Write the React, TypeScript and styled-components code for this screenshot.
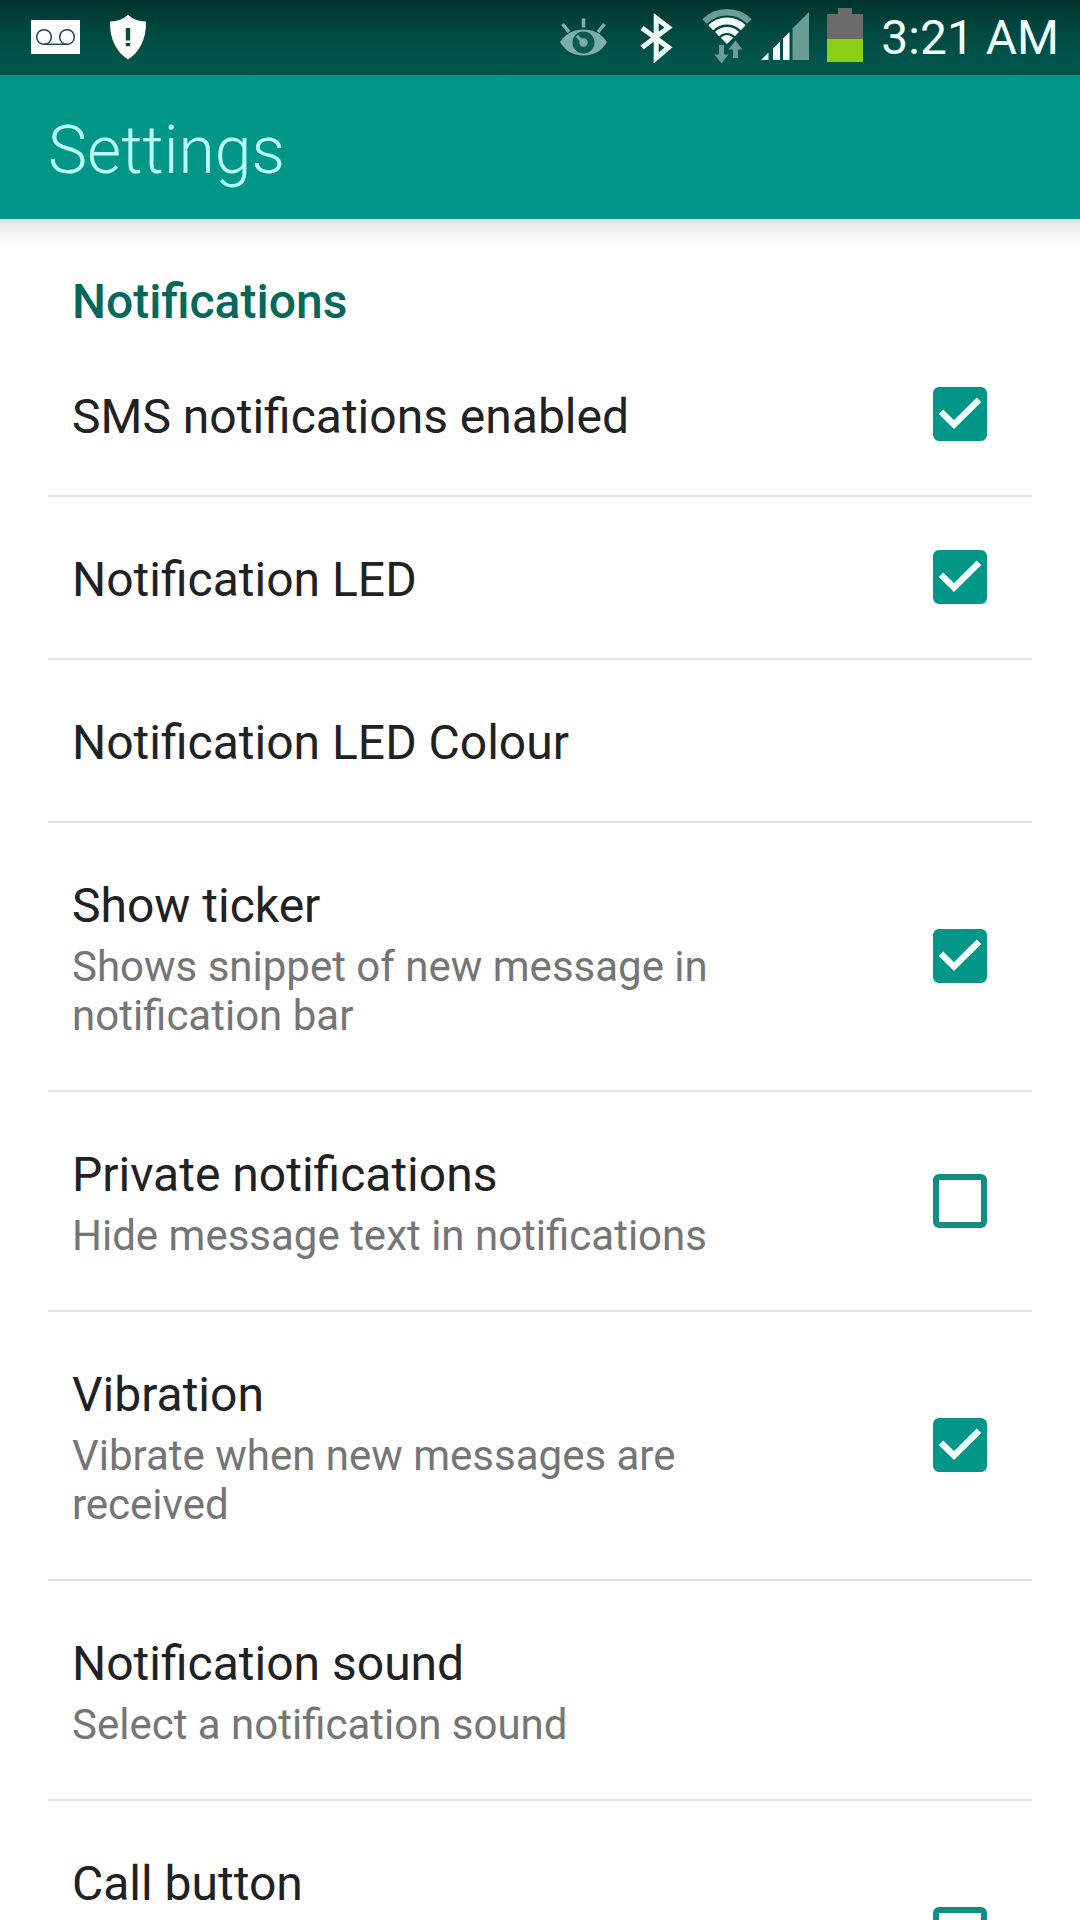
import React, { useState } from "react";
import styled, { createGlobalStyle } from "styled-components";

const GlobalStyle = createGlobalStyle`
  *, *::before, *::after { box-sizing: border-box; }
  body {
    margin: 0;
    background: #fefefe;
    font-family: Roboto, "Noto Sans", sans-serif;
  }
`;

const Screen = styled.div`
  display: flex;
  flex-direction: column;
  height: 100vh;
  overflow: hidden;
`;

const StatusBar = styled.header`
  display: flex;
  flex: none;
  align-items: center;
  justify-content: space-between;
  height: 75px;
  padding: 0 21px 0 31px;
  background: linear-gradient(#00332c, #00463e 35%, #00574d 85%, #025349);
`;

const StatusGroup = styled.div<{ $gap: number }>`
  display: flex;
  align-items: center;
  gap: ${(p) => p.$gap}px;
`;

const Glyph = styled.svg`
  display: block;
  flex: none;
`;

const Clock = styled.time`
  color: #f2fffd;
  font-size: 48px;
  line-height: 75px;
  white-space: nowrap;
`;

const AppBar = styled.div`
  display: flex;
  flex: none;
  align-items: center;
  height: 144px;
  padding: 8px 48px 0;
  background: #009788;
`;

const Title = styled.h1`
  margin: 0;
  color: #b9fff8;
  font-size: 66px;
  font-weight: 300;
  line-height: 80px;
`;

const Content = styled.main`
  flex: 1;
  min-height: 0;
  padding: 0 48px;
  overflow-y: auto;
  scrollbar-width: none;
  background: linear-gradient(#d9dde0, #e9e9eb 5px, #f5f5f5 15px, #fefefe 28px);
`;

const SectionTitle = styled.h2`
  margin: 0;
  padding: 55px 24px 4px;
  color: #04685b;
  font-size: 48px;
  font-weight: 500;
  line-height: 56px;
`;

const List = styled.ul`
  margin: 0;
  padding: 0;
  list-style: none;
`;

const Item = styled.li<{ $tall?: boolean }>`
  display: flex;
  gap: 120px;
  min-height: ${(p) => (p.$tall ? 269 : 163)}px;
  padding: 0 45px 1px 24px;
  border-bottom: 2px solid #e2e2e2;
`;

const Labels = styled.label`
  display: flex;
  flex: 1;
  flex-direction: column;
  gap: 8px;
  padding: 55px 0 49px;
`;

const LinkLabels = styled.button`
  display: flex;
  flex: 1;
  flex-direction: column;
  gap: 8px;
  padding: 55px 0 49px;
  border: 0;
  background: none;
  font: inherit;
  text-align: left;
`;

const Name = styled.span`
  color: #212121;
  font-size: 48px;
  line-height: 56px;
`;

const Summary = styled.span`
  color: #757575;
  font-size: 42px;
  line-height: 49px;
`;

const CheckWrap = styled.span`
  display: grid;
  flex: none;
  align-self: center;

  > * {
    grid-area: 1 / 1;
  }
`;

const CheckBox = styled.input`
  width: 54px;
  height: 54px;
  margin: 0;
  appearance: none;
  border: 6px solid #0d9082;
  border-radius: 6px;

  &:checked {
    border-color: #009788;
    background: #009788;
  }
`;

const Tick = styled.svg`
  pointer-events: none;
`;

type Setting = {
  id: string;
  name: string;
  summary?: string;
  checked?: boolean;
  tall?: boolean;
};

const settings: Setting[] = [
  { id: "sms", name: "SMS notifications enabled", checked: true },
  { id: "led", name: "Notification LED", checked: true },
  { id: "led-colour", name: "Notification LED Colour" },
  {
    id: "ticker",
    name: "Show ticker",
    summary: "Shows snippet of new message in notification bar",
    checked: true,
  },
  {
    id: "private",
    name: "Private notifications",
    summary: "Hide message text in notifications",
    checked: false,
  },
  {
    id: "vibration",
    name: "Vibration",
    summary: "Vibrate when new messages are received",
    checked: true,
  },
  { id: "sound", name: "Notification sound", summary: "Select a notification sound" },
  { id: "call", name: "Call button", checked: false, tall: true },
];

function SettingRow({ setting }: { setting: Setting }) {
  const [on, setOn] = useState(setting.checked === true);
  const text = (
    <>
      <Name>{setting.name}</Name>
      {setting.summary && <Summary>{setting.summary}</Summary>}
    </>
  );

  if (setting.checked === undefined) {
    return (
      <Item>
        <LinkLabels type="button">{text}</LinkLabels>
      </Item>
    );
  }

  return (
    <Item $tall={setting.tall}>
      <Labels htmlFor={setting.id}>{text}</Labels>
      <CheckWrap>
        <CheckBox
          id={setting.id}
          type="checkbox"
          checked={on}
          onChange={(e) => setOn(e.target.checked)}
        />
        {on && (
          <Tick width="54" height="54" viewBox="0 0 54 54" aria-hidden="true">
            <path d="M8 24.7 21 37.5 46 12.7" fill="none" stroke="#f4fffd" strokeWidth="6.4" />
          </Tick>
        )}
      </CheckWrap>
    </Item>
  );
}

const VoicemailIcon = () => (
  <Glyph width="49" height="46" viewBox="0 0 49 46" aria-hidden="true">
    <path d="M0 5h49v34H0z" fill="#fff" />
    <g fill="none" stroke="#1d4a44" strokeWidth="1.5">
      <circle cx="13" cy="22" r="7.3" />
      <circle cx="36" cy="22" r="7.3" />
      <path d="M13 29.3h23" />
    </g>
  </Glyph>
);

const ShieldIcon = () => (
  <Glyph width="37" height="47" viewBox="0 0 37 47" aria-hidden="true">
    <path
      d="M18 .5C21.500 4.500 28 7.300 36 7.500C36.500 24 30 38 18 45.500C6 38 -.5 24 0 7.500C8 7.300 14.500 4.500 18 .5Z"
      fill="#fff"
    />
    <path d="M15.800 14h4.400v12.500h-4.400zM15.800 29h4.400v3.300h-4.400z" fill="#0d4a43" />
  </Glyph>
);

const EyeIcon = () => (
  <Glyph width="48" height="50" viewBox="0 0 48 50" aria-hidden="true">
    <path d="M0 29C6 20 14 16.500 23.500 16.500S41 20 47 29C41 39 33 42.500 23.500 42.500S6 39 0 29Z" fill="#7bb0a9" />
    <circle cx="23.500" cy="29.500" r="8.800" fill="none" stroke="#0b5a50" strokeWidth="4.500" />
    <circle cx="23.500" cy="29.500" r="7" fill="#0b5a50" />
    <circle cx="23.500" cy="29.500" r="4.200" fill="#7bb0a9" />
    <path d="M17 23l6 6" stroke="#7bb0a9" strokeWidth="3" />
    <g stroke="#7bb0a9" strokeWidth="3.500">
      <path d="M23.500 5.500v9M2.500 11l6.500 8M44.500 11l-6.500 8" />
    </g>
  </Glyph>
);

const BluetoothIcon = () => (
  <Glyph width="34" height="52" viewBox="0 0 34 52" aria-hidden="true">
    <path
      d="M2 16 28.500 35.500 16.200 46V6L28.500 15.500 2 35.500"
      fill="none"
      stroke="#f2fffd"
      strokeWidth="5"
      strokeMiterlimit="8"
    />
  </Glyph>
);

const WifiIcon = () => (
  <Glyph width="52" height="57" viewBox="0 0 52 57" aria-hidden="true">
    <g fill="none">
      <path d="M3.550 12.550A31.750 31.750 0 0 1 48.450 12.550" stroke="#6a9d96" strokeWidth="6.500" />
      <path d="M9.740 18.740A23 23 0 0 1 42.260 18.740" stroke="#f4fffd" strokeWidth="7" />
      <path d="M16.100 25.100A14 14 0 0 1 35.900 25.100" stroke="#f4fffd" strokeWidth="6" />
    </g>
    <path d="M19.640 28.640A9 9 0 0 1 32.360 28.640L26 35Z" fill="#f4fffd" />
    <path
      d="M18 36h5v9.500h4.500L20.500 54.500 13.500 45.500H18zM34.500 31.500 41.500 40.500H37V49h-5v-8.500h-4.500z"
      fill="#6a9d96"
    />
  </Glyph>
);

const SignalIcon = () => (
  <Glyph width="48" height="51" viewBox="0 0 48 51" aria-hidden="true">
    <path d="M0 48 7.500 40.500V48zM12 48V36.500L19 29.500V48zM22 48V26.500L28.500 20V48z" fill="#f4fffd" />
    <path d="M31.500 48V16.500L48 0V48z" fill="#6a9d96" />
  </Glyph>
);

const BatteryIcon = () => (
  <Glyph width="36" height="59" viewBox="0 0 36 59" aria-hidden="true">
    <path d="M0 6h11V0h14v6h11v25H0z" fill="#6b6b6b" />
    <path d="M0 31h36v23H0z" fill="#8bce12" />
  </Glyph>
);

export default function App() {
  return (
    <Screen>
      <GlobalStyle />
      <StatusBar>
        <StatusGroup $gap={30}>
          <VoicemailIcon />
          <ShieldIcon />
        </StatusGroup>
        <StatusGroup $gap={18}>
          <StatusGroup $gap={27}>
            <StatusGroup $gap={32}>
              <EyeIcon />
              <BluetoothIcon />
            </StatusGroup>
            <StatusGroup $gap={8}>
              <WifiIcon />
              <SignalIcon />
            </StatusGroup>
          </StatusGroup>
          <BatteryIcon />
          <Clock>3:21 AM</Clock>
        </StatusGroup>
      </StatusBar>
      <AppBar>
        <Title>Settings</Title>
      </AppBar>
      <Content>
        <SectionTitle>Notifications</SectionTitle>
        <List>
          {settings.map((setting) => (
            <SettingRow key={setting.id} setting={setting} />
          ))}
        </List>
      </Content>
    </Screen>
  );
}
